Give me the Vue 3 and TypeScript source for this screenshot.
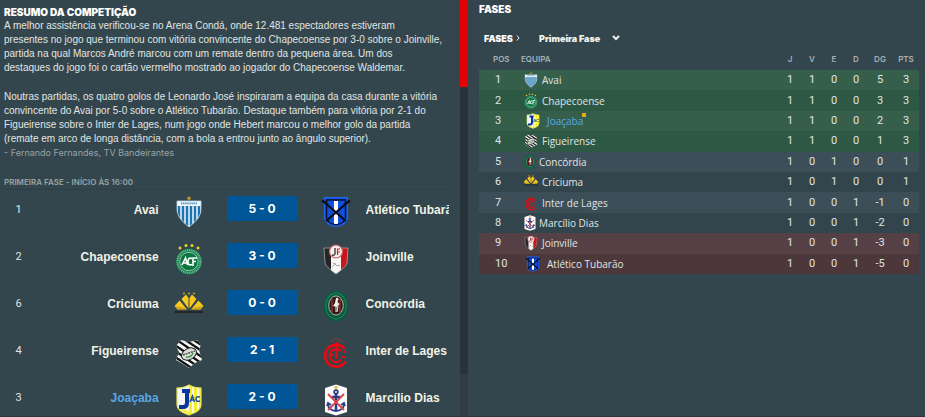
<script setup lang="ts">
import { ref } from 'vue'

interface Match {
  pos: number
  home: string
  homeCrest: string
  score: string
  away: string
  awayCrest: string
  own?: boolean
}

interface Standing {
  team: string
  crest: string
  slot?: 'narrow' | 'wide'
  zone: 'up' | 'mid' | 'down'
  own?: boolean
  stats: number[]
}

const summary: string[] = [
  `A melhor assistência verificou-se no Arena Condá, onde 12.481 espectadores estiveram
presentes no jogo que terminou com vitória convincente do Chapecoense por 3-0 sobre o Joinville,
partida na qual Marcos André marcou com um remate dentro da pequena área. Um dos
destaques do jogo foi o cartão vermelho mostrado ao jogador do Chapecoense Waldemar.`,
  `Noutras partidas, os quatro golos de Leonardo José inspiraram a equipa da casa durante a vitória
convincente do Avai por 5-0 sobre o Atlético Tubarão. Destaque também para vitória por 2-1 do
Figueirense sobre o Inter de Lages, num jogo onde Hebert marcou o melhor golo da partida
(remate em arco de longa distância, com a bola a entrou junto ao ângulo superior).`,
]

const matches: Match[] = [
  { pos: 1, home: 'Avai', homeCrest: 'avai', score: '5 - 0', away: 'Atlético Tubarão', awayCrest: 'tubarao' },
  { pos: 2, home: 'Chapecoense', homeCrest: 'chape', score: '3 - 0', away: 'Joinville', awayCrest: 'joinville' },
  { pos: 6, home: 'Criciuma', homeCrest: 'criciuma', score: '0 - 0', away: 'Concórdia', awayCrest: 'concordia' },
  { pos: 4, home: 'Figueirense', homeCrest: 'figueirense', score: '2 - 1', away: 'Inter de Lages', awayCrest: 'lages' },
  { pos: 3, home: 'Joaçaba', homeCrest: 'joacaba', score: '2 - 0', away: 'Marcílio Dias', awayCrest: 'marcilio', own: true },
]

const columns: string[] = ['J', 'V', 'E', 'D', 'DG', 'PTS']

const standings: Standing[] = [
  { team: 'Avai', crest: 'avai', zone: 'up', stats: [1, 1, 0, 0, 5, 3] },
  { team: 'Chapecoense', crest: 'chape', zone: 'up', stats: [1, 1, 0, 0, 3, 3] },
  { team: 'Joaçaba', crest: 'joacaba', slot: 'wide', zone: 'up', own: true, stats: [1, 1, 0, 0, 2, 3] },
  { team: 'Figueirense', crest: 'figueirense', zone: 'up', stats: [1, 1, 0, 0, 1, 3] },
  { team: 'Concórdia', crest: 'concordia', slot: 'narrow', zone: 'mid', stats: [1, 0, 1, 0, 0, 1] },
  { team: 'Criciuma', crest: 'criciuma', zone: 'mid', stats: [1, 0, 1, 0, 0, 1] },
  { team: 'Inter de Lages', crest: 'lages', zone: 'mid', stats: [1, 0, 0, 1, -1, 0] },
  { team: 'Marcílio Dias', crest: 'marcilio', slot: 'narrow', zone: 'mid', stats: [1, 0, 0, 1, -2, 0] },
  { team: 'Joinville', crest: 'joinville', zone: 'down', stats: [1, 0, 0, 1, -3, 0] },
  { team: 'Atlético Tubarão', crest: 'tubarao', slot: 'wide', zone: 'down', stats: [1, 0, 0, 1, -5, 0] },
]

const phase = ref<string>('Primeira Fase')
</script>

<template>
  <svg class="sprites" aria-hidden="true">
    <defs>
      <clipPath id="clip-avai"><path d="M4 5h24v8c0 8-6 13-12 18C10 26 4 21 4 13z" /></clipPath>
      <clipPath id="clip-fig"><path d="M8 3l8 2 8-2 4 5-2 5 3 10-7 3-6 5-6-4-7-4 3-8-3-6z" /></clipPath>
      <clipPath id="clip-jac"><path d="M4 4q7 0 12-3 5 3 12 3v17q0 6-12 10Q4 27 4 21z" /></clipPath>
      <clipPath id="clip-join"><path d="M4 5h24l-1 15q-1 4-11 11Q6 24 5 20z" /></clipPath>
      <clipPath id="clip-tub"><path d="M4 1h24v20q0 8-12 10Q4 29 4 21z" /></clipPath>
    </defs>
    <symbol id="avai" viewBox="0 0 32 32">
      <circle cx="16" cy="2.2" r="1.7" fill="#c3951b" />
      <g clip-path="url(#clip-avai)">
        <path fill="#f2f7fa" d="M4 5h24v26H4z" />
        <path stroke="#1c74b0" stroke-width="2.5" d="M6 10v20M10 10v20M14 10v21M18 10v21M22 10v20M26 10v20" />
        <path stroke="#3288bf" stroke-width="1.7" stroke-dasharray="1.3 .8" d="M8 7.3h16" />
      </g>
      <path fill="none" stroke="#b9d6e6" stroke-width=".8" d="M4 5h24v8c0 8-6 13-12 18C10 26 4 21 4 13z" />
    </symbol>
    <symbol id="chape" viewBox="0 0 32 32">
      <g fill="#eed321"><circle cx="7" cy="5" r="1.5" /><circle cx="13" cy="2.6" r="1.5" /><circle cx="19" cy="2.6" r="1.5" /><circle cx="25" cy="5" r="1.5" /></g>
      <circle cx="16" cy="18.500" r="13" fill="#147e4f" />
      <circle cx="16" cy="18.500" r="11.4" fill="none" stroke="#78b592" stroke-width="2" stroke-dasharray="1.1 .8" />
      <circle cx="16" cy="18.500" r="9.2" fill="#08763f" stroke="#b5d8c3" stroke-width=".8" />
      <path fill="none" stroke="#fff" stroke-width="1.6" d="M9 22l3.500-7 2 7M10.500 20h4M19 15.500q-4-1.500-4 3t4 3M20 23v-8h4M20 18.500h3" />
    </symbol>
    <symbol id="criciuma" viewBox="0 0 32 32">
      <g fill="#d9a514"><circle cx="11" cy="3.500" r="1" /><circle cx="16" cy="3.500" r="1" /><circle cx="21" cy="3.500" r="1" /></g>
      <g fill="#f5c91f">
        <path d="M6.500 10.500L1.500 16l3 3.500H14zM8.500 9l4.500-4.500 2.500 3.500v10.500zM23.500 9L19 4.500 16.500 8v10.500zM25.500 10.500l5 5.500-3 3.500H18z" />
      </g>
      <path fill="#b47f11" d="M2 16l8 1.500 4 2H5zM30 16l-8 1.500-4 2h9z" opacity=".5" />
      <path stroke="#211f1b" stroke-width="2" stroke-dasharray="1.7 .5" d="M2 22h28" />
    </symbol>
    <symbol id="figueirense" viewBox="0 0 32 32">
      <g clip-path="url(#clip-fig)">
        <path fill="#f5f5f3" d="M0 0h32v32H0z" />
        <path stroke="#101313" stroke-width="2.300" d="M-4 16l30 20M-4 10l34 23M-4 4l38 26M-2-1l38 26M5-2l34 23M13-2l26 17" />
        <ellipse cx="16" cy="17" rx="8" ry="5.5" transform="rotate(-28 16 17)" fill="#d7ddd7" stroke="#222" />
        <path stroke="#515a54" stroke-width="1.600" stroke-dasharray="2 .8" d="M10 18l12-4" />
        <path fill="none" stroke="#378949" stroke-width="1.300" d="M13 20q5 1 7-4" />
      </g>
    </symbol>
    <symbol id="joacaba" viewBox="0 0 32 32">
      <g clip-path="url(#clip-jac)">
        <path fill="#f3f6f4" d="M3 0h13v32H3z" />
        <path fill="#f6ed2e" d="M16 0h13v32H16z" />
        <path stroke="#fff" stroke-width="1.8" d="M20 2v27M25 2v27" />
        <path stroke="#f6ed2e" stroke-width="2" d="M6 24l12 6" />
      </g>
      <path fill="none" stroke="#e8e547" stroke-width="1.2" d="M4 4q7 0 12-3 5 3 12 3v17q0 6-12 10Q4 27 4 21z" />
      <path fill="none" stroke="#08359c" stroke-width="4" d="M9 7h8M14 6v13q0 4-4 4H6" />
      <path fill="none" stroke="#1d4f9e" stroke-width="1.5" d="M17 18l2.500-6 2 6M18 16h3M27 13q-4-1-4 2t4 2" />
    </symbol>
    <symbol id="tubarao" viewBox="0 0 32 32">
      <g clip-path="url(#clip-tub)">
        <path fill="#1150dc" d="M3 0h26v32H3z" />
        <path fill="#fff" d="M14 5h4v23h-4z" />
        <path stroke="#080b18" stroke-width="2.200" d="M3 5l24 21M29 5L5 26" />
        <path fill="none" stroke="#0b1228" stroke-width="1.400" d="M6.500 4h19v17q0 6-9.500 8-9.500-2-9.500-8z" />
      </g>
      <path fill="none" stroke="#2668ef" stroke-width="1" d="M4.500 1.500h23v20q0 7-11.500 9-11.500-2-11.500-9z" />
      <path stroke="#0a1020" stroke-width="2.500" d="M2 4.500l5 3.500M30 4.500L25 8" />
    </symbol>
    <symbol id="joinville" viewBox="0 0 32 32">
      <g clip-path="url(#clip-join)">
        <path fill="#242627" d="M3 5h9v26H3z" />
        <path fill="#f7f6f3" d="M11 5h10v26H11z" />
        <path fill="#cb151a" d="M21 5h8v26h-8z" />
        <path fill="none" stroke="#a9acaa" d="M12 24l3-3 2 2 3-1M13 20l3 1" />
      </g>
      <path fill="none" stroke="#a9a5a2" stroke-width=".8" d="M4 5h24l-1 15q-1 4-11 11Q6 24 5 20z" />
      <circle cx="16" cy="8.500" r="6.500" fill="#f8efed" stroke="#d0605c" stroke-width="1.200" />
      <path fill="none" stroke="#40383a" stroke-width="1.400" d="M15 5v6q-1 2-3 1" />
      <path fill="none" stroke="#cb272b" stroke-width="1.200" d="M17.500 12V6H20M17.500 9H20" />
    </symbol>
    <symbol id="concordia" viewBox="0 0 32 32">
      <ellipse cx="16" cy="16" rx="12.500" ry="15.200" fill="#075c3d" />
      <ellipse cx="16" cy="16" rx="10.300" ry="12.800" fill="none" stroke="#3d8a6a" stroke-width="1.300" stroke-dasharray="1.200 1" />
      <ellipse cx="16" cy="15.500" rx="7.300" ry="9.600" fill="#321c1b" stroke="#cfd3c9" stroke-width=".8" />
      <path stroke="#842924" stroke-width="1.800" d="M12 9v13M20 9v13" />
      <path fill="#f0ece6" d="M16 8q2-1 2.500 1l-1 3 2 2-2.500 3-4-1 2-3z" />
      <path fill="none" stroke="#eee" stroke-width="1" d="M16 16v6M18 16l-1 6" />
    </symbol>
    <symbol id="lages" viewBox="0 0 32 32">
      <g fill="none" stroke="#e50b12">
        <path stroke-width="2.800" d="M24.500 11.500A11 11 0 1 0 25.500 24.500" />
        <path stroke-width="2.200" d="M21 14A6.500 6.500 0 1 0 21.500 22.500" />
        <path stroke-width="2.200" d="M16.500 5v17M10 18h4M16.500 7l-4 3M16.500 7l5 3" />
        <path stroke-width="2" d="M24.500 13v3M21 20h5" />
        <path stroke="#8a3a40" d="M10 4.500l6-3 7 3" />
      </g>
    </symbol>
    <symbol id="marcilio" viewBox="0 0 32 32">
      <path fill="#fafafa" d="M5 4l11-3.500L27 4v24l-11 3.500L5 28z" />
      <circle cx="16" cy="3.500" r="1.700" fill="#ebc247" />
      <g fill="none" stroke="#283d86" stroke-width="1.800">
        <circle cx="16" cy="8" r="1.800" />
        <path stroke-width="2.500" d="M16 10v17M12 13h8" />
        <path d="M8 20q0 6 8 7 8-1 8-7M7 22l1-3 3 2M25 22l-1-3-3 2" />
      </g>
      <path fill="none" stroke="#d8434b" stroke-width="1.800" d="M8 10l16 16M24 10L8 26" />
    </symbol>
  </svg>

  <main class="screen">
    <section class="summary">
      <h2>RESUMO DA COMPETIÇÃO</h2>
      <p v-for="(text, i) in summary" :key="i" class="story">{{ text }}</p>
      <p class="byline">- Fernando Fernandes, TV Bandeirantes</p>

      <h3>PRIMEIRA FASE - INÍCIO ÀS 16:00</h3>
      <ul class="matches">
        <li v-for="m in matches" :key="m.home" class="match">
          <span class="rank">{{ m.pos }}</span>
          <span class="team home" :class="{ own: m.own }">{{ m.home }}</span>
          <svg class="crest"><use :href="'#' + m.homeCrest" /></svg>
          <button type="button" class="score">{{ m.score }}</button>
          <svg class="crest away-crest"><use :href="'#' + m.awayCrest" /></svg>
          <span class="team">{{ m.away }}</span>
        </li>
      </ul>
    </section>

    <div class="scrollbar"><div class="thumb"></div><div class="track"></div></div>

    <section class="phases">
      <h2>FASES</h2>
      <div class="picker">
        <label for="phase">FASES <svg class="arrow" viewBox="0 0 4 6"><path d="M1 .5L3 3 1 5.500" /></svg></label>
        <span class="select">
          <select id="phase" v-model="phase"><option>Primeira Fase</option></select>
          <svg class="chevron" viewBox="0 0 8 6"><path d="M1 1l3 3 3-3" /></svg>
        </span>
      </div>

      <table>
        <thead>
          <tr>
            <th class="pos">POS</th>
            <th class="club">EQUIPA</th>
            <th v-for="c in columns" :key="c" :class="{ broad: c.length > 1, stat: c.length === 1 }">{{ c }}</th>
          </tr>
        </thead>
        <tbody>
          <tr v-for="(s, i) in standings" :key="s.team" :class="s.zone">
            <td class="pos">{{ i + 1 }}</td>
            <td class="club">
              <div class="entry">
                <span class="slot" :class="s.slot"><svg class="badge"><use :href="'#' + s.crest" /></svg></span>
                <span class="name" :class="{ own: s.own }">{{ s.team }}<i v-if="s.own" class="marker"></i></span>
              </div>
            </td>
            <td v-for="(n, k) in s.stats" :key="k">{{ n }}</td>
          </tr>
        </tbody>
      </table>
    </section>
  </main>
</template>

<style>
body {
  background: #33464e;
}
</style>

<style scoped>
.sprites {
  position: absolute;
  width: 0;
  height: 0;
}
.screen {
  display: grid;
  grid-template-columns: minmax(0, 460fr) 8px minmax(0, 457fr);
  height: 100vh;
  overflow: hidden;
  box-sizing: border-box;
  border-bottom: 1px solid #2b3840;
  background: #33464e;
  color: #e0e5e3;
  font-family: Roboto, "Liberation Sans", sans-serif;
  font-size: 11px;
}
h2, h3, p, ul {
  margin: 0;
  padding: 0;
}
h2 {
  font-family: Inter, sans-serif;
  font-size: 10px;
  line-height: 14px;
  font-weight: 900;
  color: #fff;
}
.summary {
  padding: 5px 11px 0 4px;
  overflow: hidden;
}
.story {
  white-space: pre;
  font-family: "Liberation Sans", Arial, sans-serif;
  font-size: 10px;
  line-height: 14px;
}
.story + .story {
  margin-top: 15px;
}
.byline {
  font-family: Inter, sans-serif;
  font-size: 9px;
  line-height: 14px;
  color: #99a4a5;
}
h3 {
  margin-top: 15px;
  border-bottom: 1px solid #2f3f46;
  font-family: Inter, sans-serif;
  font-size: 8px;
  line-height: 14px;
  font-weight: 600;
  color: #98a3a3;
}
.matches {
  list-style: none;
}
.match {
  display: grid;
  grid-template-columns: 29px minmax(0, 125fr) 68px 71px 68px minmax(0, 83fr);
  align-items: start;
  height: 47px;
  padding-top: 6px;
  box-sizing: border-box;
}
.rank {
  text-align: center;
  line-height: 28px;
}
.team {
  overflow: hidden;
  white-space: nowrap;
  font-family: "Liberation Sans", Arial, sans-serif;
  font-size: 12px;
  font-weight: 700;
  line-height: 28px;
  color: #f1f2e6;
}
.home {
  text-align: right;
}
.own,
.team.own {
  color: #5aa5e6;
}
.crest {
  width: 32px;
  height: 32px;
  margin: 0 14px;
}
.away-crest {
  justify-self: end;
}
.score {
  height: 25px;
  padding: 0;
  border: 0;
  border-radius: 2px;
  background: #005696;
  color: #fff;
  font-family: Inter, sans-serif;
  font-size: 12px;
  font-weight: 700;
}
.scrollbar {
  display: flex;
  flex-direction: column;
  background: #2f3c44;
}
.thumb {
  height: 21%;
  background: #e20202;
}
.track {
  height: 69%;
  background: #26333b;
}
.phases {
  padding: 2px 6px 0 11px;
}
.picker {
  display: flex;
  align-items: center;
  height: 20px;
  margin-top: 12px;
  padding-left: 5px;
  font-family: Inter, sans-serif;
  font-size: 9px;
  font-weight: 900;
  color: #fff;
}
.picker label {
  display: flex;
  align-items: center;
  gap: 3px;
  width: 55px;
}
.arrow {
  width: 4px;
  height: 6px;
}
.arrow path,
.chevron path {
  fill: none;
  stroke: #eef1f0;
  stroke-width: 1;
}
.select {
  display: flex;
  align-items: center;
}
.select select {
  appearance: none;
  width: 73px;
  padding: 0;
  border: 0;
  background: transparent;
  color: #f3f4ec;
  font-family: Inter, sans-serif;
  font-size: 9px;
  font-weight: 900;
}
.chevron {
  width: 8px;
  height: 6px;
}
.chevron path {
  stroke-width: 2;
}
table {
  width: 100%;
  height: 226px;
  table-layout: fixed;
  border-collapse: collapse;
}
th {
  height: 22px;
  padding: 0;
  font-family: Inter, sans-serif;
  font-size: 8px;
  font-weight: 600;
  color: #a7b0b1;
}
th.pos {
  width: 28px;
  padding-left: 14px;
  text-align: left;
}
th.club {
  text-align: left;
}
.stat {
  width: 22px;
}
.broad {
  width: 26px;
}
td {
  padding: 0;
  line-height: 16px;
  text-align: center;
}
td.pos {
  padding-left: 16px;
  text-align: left;
}
td.club {
  padding-left: 2px;
  text-align: left;
}
.entry {
  display: flex;
  align-items: center;
}
.slot {
  display: flex;
  justify-content: center;
  width: 16px;
  padding-right: 3px;
}
.narrow {
  width: 13px;
}
.wide {
  width: 20px;
  padding-right: 4px;
}
.badge {
  flex: none;
  width: 16px;
  height: 16px;
}
.name {
  position: relative;
  font-family: "Open Sans", "Liberation Sans", sans-serif;
  font-size: 10px;
}
.marker {
  position: absolute;
  top: 0;
  right: -3px;
  width: 4px;
  height: 4px;
  background: #e8a818;
}
.up {
  background: #2d5844;
}
.up:nth-child(odd) {
  background: #365f4b;
}
.mid {
  background: #32454d;
}
.mid:nth-child(odd) {
  background: #3c4e57;
}
.down {
  background: #4c373b;
}
.down:nth-child(odd) {
  background: #554145;
}
</style>
